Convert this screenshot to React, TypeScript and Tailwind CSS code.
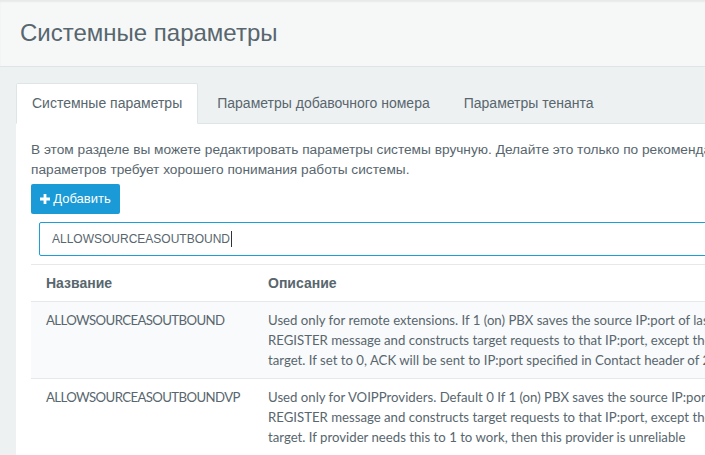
import React from "react";

const arial = { fontFamily: '"Liberation Sans", Arial, sans-serif' };

export default function App() {
  return (
    <div className="w-[705px] h-[455px] overflow-hidden bg-[#eef1f2] text-[#58666e]" style={arial}>
      <div className="w-[1100px]">
        {/* Page header */}
        <div className="h-[67px] bg-[#f6f8f8] border-b border-[#dee5e7] shadow-[inset_0_2px_2px_rgba(0,0,0,0.06)] flex items-center pl-[20px]">
          <h1 className="text-[24px] leading-none text-[#58666e] font-normal">Системные параметры</h1>
        </div>

        <div className="pl-[16px] pt-[16px]">
          {/* Tabs */}
          <div className="flex items-end border-b border-[#dee5e7] h-[41px]">
            <div className="h-[41px] -mb-px bg-white border border-[#dee5e7] border-b-white rounded-t-[2px] px-[15px] flex items-center text-[14px] mr-[4px]">
              Системные параметры
            </div>
            <div className="h-[40px] px-[15px] flex items-center text-[14px] mr-[4px]">
              Параметры добавочного номера
            </div>
            <div className="h-[40px] px-[15px] flex items-center text-[14px]">
              Параметры тенанта
            </div>
          </div>

          {/* Content */}
          <div className="bg-white pl-[15px] pt-[16px] h-[400px]">
            <div className="text-[13.7px] leading-[20px]">
              <div className="whitespace-nowrap">
                В этом разделе вы можете редактировать параметры системы вручную. Делайте это только по рекомендации службы поддержки, так как изменение
              </div>
              <div className="whitespace-nowrap">параметров требует хорошего понимания работы системы.</div>
            </div>

            <button className="mt-[4px] h-[30px] w-[89px] bg-[#1a9ad6] rounded-[2px] text-white text-[13px] flex items-center justify-center gap-[3px]">
              <svg width="10" height="10" viewBox="0 0 10 10" className="shrink-0">
                <path d="M3.6 0h2.8v3.6H10v2.8H6.4V10H3.6V6.4H0V3.6h3.6z" fill="white" />
              </svg>
              <span>Добавить</span>
            </button>

            <div className="mt-[8px] ml-[8px] h-[34px] border border-[#1c9fd8] rounded-[2px] flex items-center pl-[12px] text-[12px] text-[#58666e]">
              <span>ALLOWSOURCEASOUTBOUND</span>
              <span className="w-px h-[16px] bg-[#333] ml-[1px]" />
            </div>

            {/* Table */}
            <div className="mt-[8px]" style={{ fontFamily: 'Lato, "Open Sans", sans-serif' }}>
              <div className="flex h-[38px] items-center border-t border-b border-[#e6e9ea] font-bold text-[14px]" style={arial}>
                <div className="w-[222px] pl-[15px]">Название</div>
                <div className="pl-[15px]">Описание</div>
              </div>
              <div className="flex bg-[#f9fafb] border-b border-[#e6e9ea] py-[8px] text-[13.2px] leading-[20px] text-[#58666e]">
                <div className="w-[222px] pl-[15px] tracking-[-0.6px]">ALLOWSOURCEASOUTBOUND</div>
                <div className="pl-[15px] whitespace-nowrap">
                  <div>Used only for remote extensions. If 1 (on) PBX saves the source IP:port of last</div>
                  <div>REGISTER message and constructs target requests to that IP:port, except the ACK for INVITE</div>
                  <div>target. If set to 0, ACK will be sent to IP:port specified in Contact header of 200 OK</div>
                </div>
              </div>
              <div className="flex py-[8px] text-[13.2px] leading-[20px] text-[#58666e]">
                <div className="w-[222px] pl-[15px] tracking-[-0.6px]">ALLOWSOURCEASOUTBOUNDVP</div>
                <div className="pl-[15px] whitespace-nowrap">
                  <div>Used only for VOIPProviders. Default 0 If 1 (on) PBX saves the source IP:port of last</div>
                  <div>REGISTER message and constructs target requests to that IP:port, except the ACK for INVITE</div>
                  <div>target. If provider needs this to 1 to work, then this provider is unreliable</div>
                </div>
              </div>
            </div>
          </div>
        </div>
      </div>
    </div>
  );
}
